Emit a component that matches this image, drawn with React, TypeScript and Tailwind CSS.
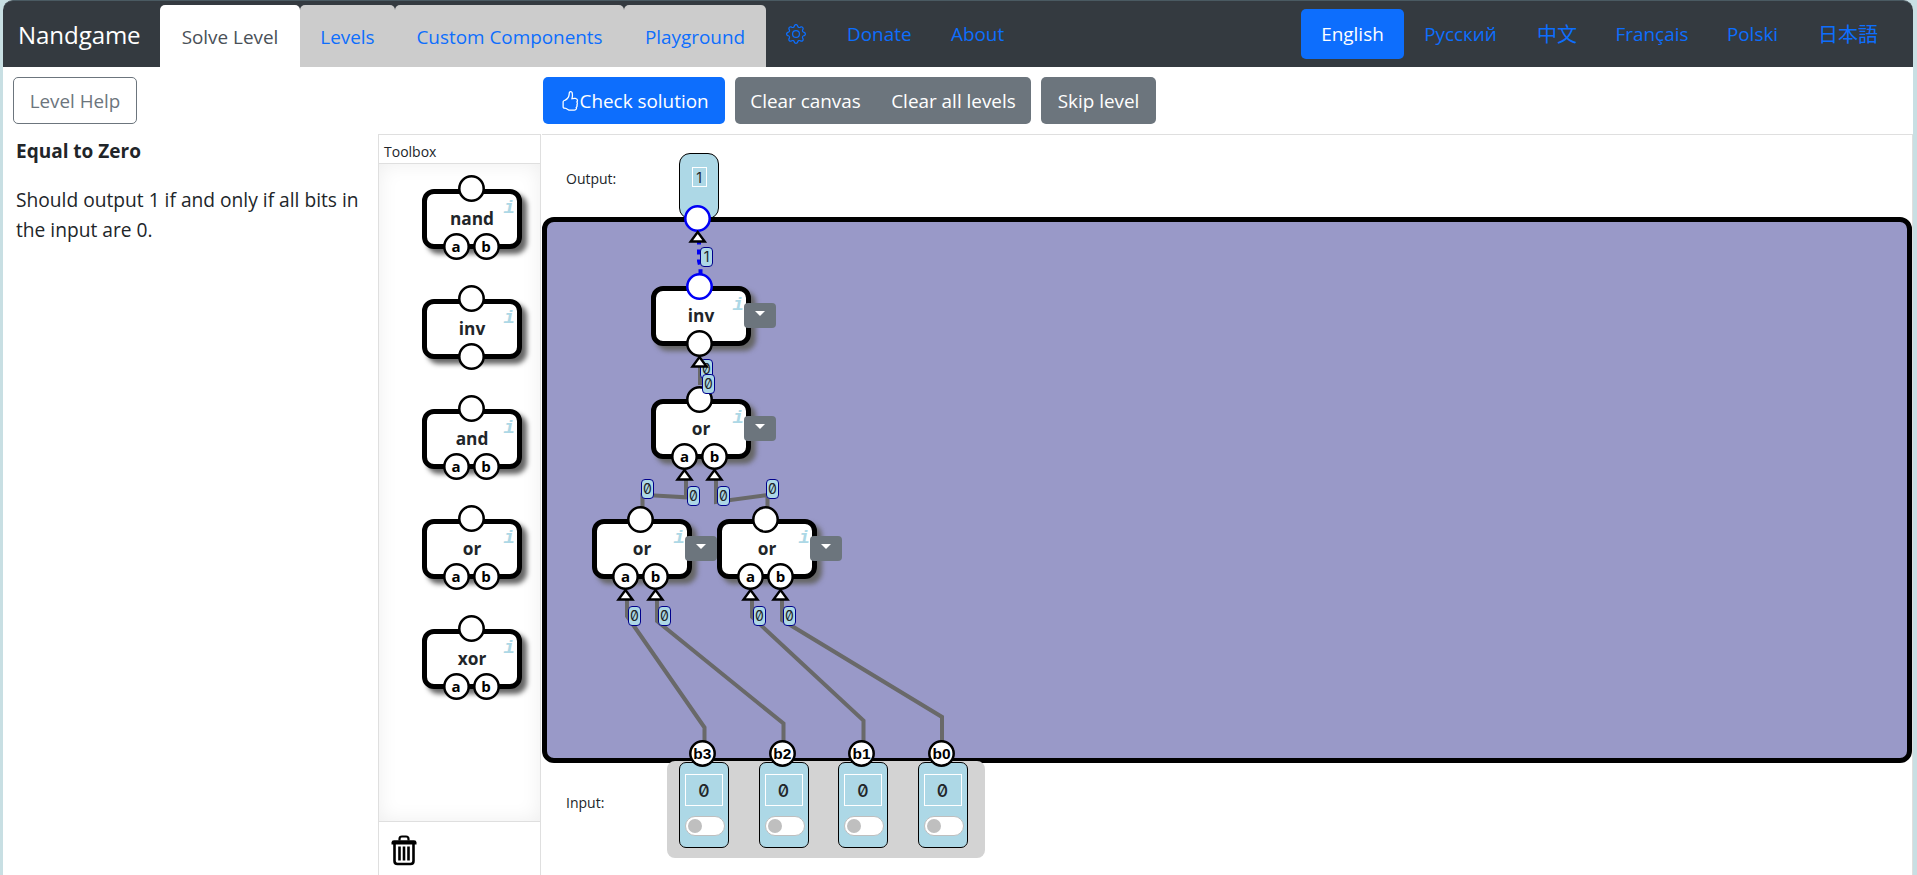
import React from "react";
import { BsGear, BsHandThumbsUp } from "react-icons/bs";

type Value = "0" | "1";

const TOOLBOX: { name: string; inputs: string[] }[] = [
  { name: "nand", inputs: ["a", "b"] },
  { name: "inv", inputs: [""] },
  { name: "and", inputs: ["a", "b"] },
  { name: "or", inputs: ["a", "b"] },
  { name: "xor", inputs: ["a", "b"] },
];

const NODES = [
  { name: "inv", inputs: [""], x: 109, y: 151, active: true },
  { name: "or", inputs: ["a", "b"], x: 109, y: 264, active: false },
  { name: "or", inputs: ["a", "b"], x: 50, y: 384, active: false },
  { name: "or", inputs: ["a", "b"], x: 175, y: 384, active: false },
];

const WIRES = [
  "M158 230V250",
  "M144 345V362.3L100.5 359.8V372",
  "M174 345V367L225.5 360V372",
  "M85 463V481L162.5 592.5V608",
  "M115 463V486L241.5 588.5V608",
  "M210 463V482L321.5 585.5V608",
  "M240 463V485L400 582V608",
];

const ARROWS = [
  [155.7, 95],
  [157.5, 220],
  [142.5, 333],
  [172.5, 333],
  [83.5, 453],
  [113.5, 453],
  [208.5, 453],
  [238.5, 453],
];

const TAGS: { x: number; y: number; v: Value }[] = [
  { x: 158, y: 112, v: "1" },
  { x: 160, y: 239, v: "0" },
  { x: 99, y: 344, v: "0" },
  { x: 145, y: 351, v: "0" },
  { x: 175, y: 351, v: "0" },
  { x: 224, y: 344, v: "0" },
  { x: 86, y: 471, v: "0" },
  { x: 116, y: 471, v: "0" },
  { x: 211, y: 471, v: "0" },
  { x: 241, y: 471, v: "0" },
];

const INPUTS = [
  { name: "b3", cx: 160.3 },
  { name: "b2", cx: 240.3 },
  { name: "b1", cx: 319.5 },
  { name: "b0", cx: 399.5 },
];

function Pin({ label, active, className = "text-[15px]" }: { label?: string; active?: boolean; className?: string }) {
  return (
    <span className={`relative flex h-[27px] w-[27px] shrink-0 items-center justify-center leading-none font-bold text-black ${className}`}>
      <svg viewBox="0 0 27 27" className="absolute inset-0 h-[27px] w-[27px]">
        <circle cx="13.5" cy="13.5" r="12.2" fill="white" stroke={active ? "#0000f5" : "black"} strokeWidth="2.5" />
      </svg>
      <span className="relative">{label}</span>
    </span>
  );
}

function Gate({ name, inputs, active, placed }: { name: string; inputs: string[]; active?: boolean; placed?: boolean }) {
  return (
    <div className="relative h-[60px] w-[100px] rounded-[12px] border-[5px] border-black bg-white shadow-[5px_5px_5px_#666]">
      <span className={`absolute ${placed ? "top-[-18px] left-[30px]" : "top-[-19px] left-[30.5px]"}`}>
        <Pin active={active} />
      </span>
      <span className="absolute top-[3px] right-[2px] font-['Liberation_Mono',monospace] text-[19px] leading-[22px] font-bold text-[#add8e6] italic">
        i
      </span>
      <span className="flex h-[50px] items-center justify-center text-[17.3px] font-bold">{name}</span>
      <span className={`absolute right-0 bottom-[-16px] flex justify-center gap-[3px] ${placed ? "left-[-3px]" : "left-[-2px]"}`}>
        {inputs.map((p, i) => (
          <Pin key={i} label={p} />
        ))}
      </span>
    </div>
  );
}

function Tag({ v }: { v: Value }) {
  return (
    <span className="flex h-[20px] w-[13px] items-center justify-center rounded-[4px] border border-[#00008b] bg-[#add8e6] font-[Inter,sans-serif] text-[14px] leading-none [font-feature-settings:'zero']">
      {v}
    </span>
  );
}

function Tab({ children, className }: { children: React.ReactNode; className: string }) {
  return (
    <a className={`flex h-[62px] items-center justify-center rounded-t-[5px] pt-[2px] ${className}`}>{children}</a>
  );
}

function Header() {
  return (
    <header className="flex h-[67px] shrink-0 rounded-t-[10px] border-t border-[#4a5a62] bg-[#343a40] text-[18.9px] text-[#0d6efd]">
      <div className="w-[157px] pt-[16px] pl-[15px] text-[24.1px] leading-[36px] tracking-[-0.1px] text-white">Nandgame</div>
      <nav className="mt-[4px] flex">
        <Tab className="w-[140px] bg-white text-[#495057]">Solve Level</Tab>
        <Tab className="w-[95px] bg-[#ccc]">Levels</Tab>
        <Tab className="w-[229px] bg-[#ccc]">Custom Components</Tab>
        <Tab className="w-[142px] bg-[#ccc]">Playground</Tab>
      </nav>
      <nav className="flex h-[66px] items-center">
        <BsGear className="ml-[20px] h-[20px] w-[20px]" />
        <a className="ml-[41px] w-[64px]">Donate</a>
        <a className="ml-[40px]">About</a>
      </nav>
      <nav className="mr-[14px] ml-auto flex h-[66px] items-center text-center">
        <a className="flex h-[50px] w-[103px] items-center justify-center rounded-[5px] bg-[#0d6efd] text-white">English</a>
        <a className="w-[113px]">Русский</a>
        <a className="w-[80px] font-['Noto_Sans_CJK_SC',sans-serif] text-[20px]">中文</a>
        <a className="w-[110px]">Français</a>
        <a className="w-[91px]">Polski</a>
        <a className="w-[101px] pr-px font-['Noto_Sans_CJK_JP',sans-serif] text-[20px]">日本語</a>
      </nav>
    </header>
  );
}

function Toolbar() {
  return (
    <div className="flex h-[67px] shrink-0 items-start pt-[10px] text-[18.9px] text-white">
      <button className="ml-[10px] h-[47px] w-[124px] rounded-[5px] border border-[#6c757d] pt-px text-[18.8px] text-[#6c757d]">
        Level Help
      </button>
      <button className="ml-[406px] flex h-[47px] w-[182px] items-center rounded-[5px] bg-[#0d6efd] pt-px pl-[16.5px]">
        <BsHandThumbsUp className="h-[20px] w-[20px]" />
        Check solution
      </button>
      <div className="ml-[10px] flex h-[47px] w-[296px] items-center rounded-[5px] bg-[#6c757d] pt-px">
        <button className="w-[141px]">Clear canvas</button>
        <button className="w-[155px]">Clear all levels</button>
      </div>
      <button className="ml-[10px] h-[47px] w-[115px] rounded-[5px] bg-[#6c757d] pt-px">Skip level</button>
    </div>
  );
}

function TrashIcon() {
  return (
    <svg viewBox="0 0 26 31" className="h-[31px] w-[26px]" fill="none" stroke="black">
      <path d="M8.5 5.5V4Q8.5 1.5 11 1.5H15Q17.5 1.5 17.5 4V5.5" strokeWidth="2.2" />
      <path d="M.5 9.5V7.5Q.5 5.2 3 5.2H23Q25.5 5.2 25.5 7.5V9.5Z" fill="black" stroke="none" />
      <path d="M3.5 9V26Q3.5 29 6.5 29H19.5Q22.5 29 22.5 26V9" strokeWidth="2.6" />
      <path d="M8.5 11.5V25.5M13 11.5V25.5M17.5 11.5V25.5" strokeWidth="2.6" />
    </svg>
  );
}

function Toolbox() {
  return (
    <aside className="mr-px flex w-[163px] shrink-0 flex-col border-t border-r border-l border-[#dfdfdf]">
      <div className="h-[29px] shrink-0 border-b border-[#dfdfdf] pt-[7px] pl-[5px] text-[14px] leading-[20px]">Toolbox</div>
      <div className="flex h-[657px] shrink-0 flex-col gap-[50px] pt-[25px] pl-[43px] shadow-[inset_0_0_20px_rgba(0,0,0,0.07)]">
        {TOOLBOX.map((g) => (
          <Gate key={g.name} {...g} />
        ))}
      </div>
      <div className="flex-1 border-t border-[#dfdfdf] pt-[13px] pl-[12px]">
        <TrashIcon />
      </div>
    </aside>
  );
}

function InputCell() {
  return (
    <div className="flex h-[86px] w-[50px] flex-col items-center rounded-[7px] border border-black bg-[#add8e6] pt-[11px]">
      <div className="flex h-[32px] w-[38px] items-center justify-center border border-white pt-px font-[Inter,sans-serif] text-[17.5px] leading-none font-medium [font-feature-settings:'zero']">
        0
      </div>
      <div className="mt-[10px] ml-[2px] flex h-[20px] w-[40px] items-center rounded-full border border-[#bfbfbf] bg-white pl-[2px]">
        <span className="h-[14px] w-[14px] rounded-full bg-[#bfbfbf]" />
      </div>
    </div>
  );
}

function Workspace() {
  return (
    <main className="relative flex flex-1 flex-col border-t border-r border-[#dfdfdf]">
      <div className="flex h-[82px] shrink-0 pl-[24px] text-[14px]">
        <span className="w-[113px] pt-[34px] leading-[20px]">Output:</span>
        <div className="mt-[18px] flex h-[66px] w-[40px] justify-center rounded-[11px] border border-black bg-[#add8e6] pt-[13px]">
          <span className="flex h-[20px] w-[15px] items-center justify-center border border-white font-[Inter,sans-serif] text-[14px]">1</span>
        </div>
      </div>
      <div className="h-[546px] shrink-0 rounded-[12px] border-[5px] border-black bg-[#9999c8]" />
      <div className="flex pl-[24px] text-[14px]">
        <span className="w-[101px] pt-[30px] leading-[20px]">Input:</span>
        <div className="z-10 -mt-[2px] flex h-[97px] w-[318px] gap-[29.5px] rounded-[8px] bg-[#d3d3d3] pt-[1px] pl-[12px]">
          {INPUTS.map((n) => (
            <InputCell key={n.name} />
          ))}
        </div>
      </div>

      <svg className="absolute top-0 left-0 h-[740px] w-[1370px]" fill="none" strokeLinejoin="miter">
        {WIRES.map((d) => (
          <path key={d} d={d} stroke="#696969" strokeWidth="4" />
        ))}
        <path d="M157 104V126L158.5 132V140" stroke="#0000f5" strokeWidth="4" strokeDasharray="5 5" strokeDashoffset="-0.5" />
      </svg>

      {NODES.map((n, i) => (
        <div key={i} className="absolute" style={{ left: n.x, top: n.y }}>
          <Gate name={n.name} inputs={n.inputs} active={n.active} placed />
          <button className="absolute top-[17px] left-[93px] flex h-[25px] w-[32px] justify-center rounded-[4px] bg-[#6c757d] pt-[8px]">
            <span className="h-0 w-0 border-x-[5px] border-t-[5px] border-x-transparent border-t-white" />
          </button>
        </div>
      ))}

      <div className="absolute top-[70px] left-[142.3px]">
        <Pin active />
      </div>
      {INPUTS.map((n) => (
        <div key={n.name} className="absolute top-[605px] z-20" style={{ left: n.cx - 13.5 }}>
          <Pin label={n.name} className="font-['Liberation_Sans',sans-serif] text-[15.5px]" />
        </div>
      ))}

      <div className="absolute top-[224px] left-[158px]">
        <Tag v="0" />
      </div>
      <svg className="absolute top-0 left-0 h-[740px] w-[1370px]">
        {ARROWS.map(([x, y]) => (
          <path key={`${x}-${y}`} d="M0 2L7 11.5H-7Z" transform={`translate(${x} ${y})`} fill="white" stroke="black" strokeWidth="2.4" />
        ))}
      </svg>
      {TAGS.map((t) => (
        <div key={`${t.x}-${t.y}`} className="absolute" style={{ left: t.x, top: t.y }}>
          <Tag v={t.v} />
        </div>
      ))}
    </main>
  );
}

export default function App() {
  return (
    <div className="h-[875px] overflow-hidden bg-[#c8dfe3] pr-[4px] pl-[3px] font-['Open_Sans','Noto_Sans',sans-serif] text-[#212529]">
      <div className="flex h-full flex-col rounded-t-[10px] bg-white">
        <Header />
        <Toolbar />
        <div className="flex min-h-0 flex-1">
          <section className="w-[375px] shrink-0 pt-[2px] pl-[13px] text-[19.2px] leading-[30px]">
            <h1 className="mb-[19px] text-[19px] font-bold">Equal to Zero</h1>
            <p>
              Should output 1 if and only if all bits in
              <br />
              the input are 0.
            </p>
          </section>
          <Toolbox />
          <Workspace />
        </div>
      </div>
    </div>
  );
}
